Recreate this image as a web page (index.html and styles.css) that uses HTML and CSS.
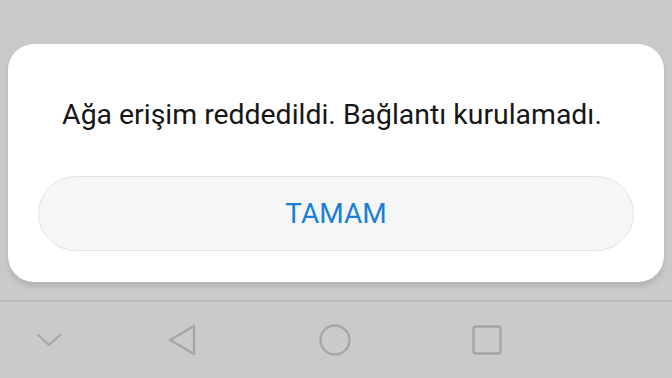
FILE: index.html
```html
<!DOCTYPE html>
<html lang="tr">
<head>
    <meta charset="UTF-8">
    <meta name="viewport" content="width=device-width, initial-scale=1.0">
    <title>Ağ hatası</title>
    <link rel="stylesheet" href="styles.css">
</head>
<body>
    <div class="screen">
        <div class="overlay">
            <div class="dialog">
                <p class="message">Ağa erişim reddedildi. Bağlantı kurulamadı.</p>
                <button class="ok_btn" type="button">TAMAM</button>
            </div>
        </div>
        <div class="navbar">
            <span class="nav_item nav_down">
                <svg width="40" height="40" viewBox="0 0 40 40"><path d="M9 15 L20 25 L31 15" fill="none" stroke="#a6a6a6" stroke-width="2" stroke-linejoin="round" stroke-linecap="round"/></svg>
            </span>
            <span class="nav_item nav_back">
                <svg width="40" height="40" viewBox="0 0 40 40"><path d="M8 20 L32 6 L32 34 Z" fill="none" stroke="#a6a6a6" stroke-width="2.4" stroke-linejoin="round"/></svg>
            </span>
            <span class="nav_item nav_home">
                <svg width="40" height="40" viewBox="0 0 40 40"><circle cx="20" cy="20" r="14.5" fill="none" stroke="#a6a6a6" stroke-width="2.4"/></svg>
            </span>
            <span class="nav_item nav_recent">
                <svg width="40" height="40" viewBox="0 0 40 40"><rect x="6.5" y="6.5" width="27" height="27" rx="2.5" fill="none" stroke="#a6a6a6" stroke-width="2.4"/></svg>
            </span>
        </div>
    </div>
</body>
</html>
```

FILE: styles.css
```css
body{
    margin: 0;
    background-color: #cacaca;
    font-family: Roboto, "Noto Sans", sans-serif;
}
.screen{
    width: 672px;
    height: 378px;
    overflow: hidden;
}
.overlay{
    height: 256px;
    padding: 44px 8px 0;
}
.dialog{
    height: 238px;
    background-color: #fff;
    border-radius: 26px;
    box-shadow: 0 4px 6px rgba(0, 0, 0, 0.12);
    box-sizing: border-box;
    padding: 55px 30px 0;
}
.message{
    margin: 0;
    padding-right: 8px;
    font-size: 28.4px;
    line-height: 32px;
    color: #161616;
    text-align: center;
    white-space: nowrap;
}
.ok_btn{
    display: block;
    width: 100%;
    height: 75px;
    margin-top: 45px;
    border: 1px solid #e2e2e2;
    border-radius: 38px;
    background-color: #f6f6f6;
    color: #1a7fd8;
    font-family: inherit;
    font-size: 28px;
}
.navbar{
    border-top: 2px solid #bdbdbd;
    height: 76px;
    display: flex;
    align-items: center;
    padding-left: 29px;
}
.nav_item{
    width: 40px;
    height: 40px;
    display: block;
}
.nav_item svg{
    display: block;
}
.nav_down{
    margin-right: 93px;
}
.nav_back{
    margin-right: 113px;
}
.nav_home{
    margin-right: 112px;
}
```
